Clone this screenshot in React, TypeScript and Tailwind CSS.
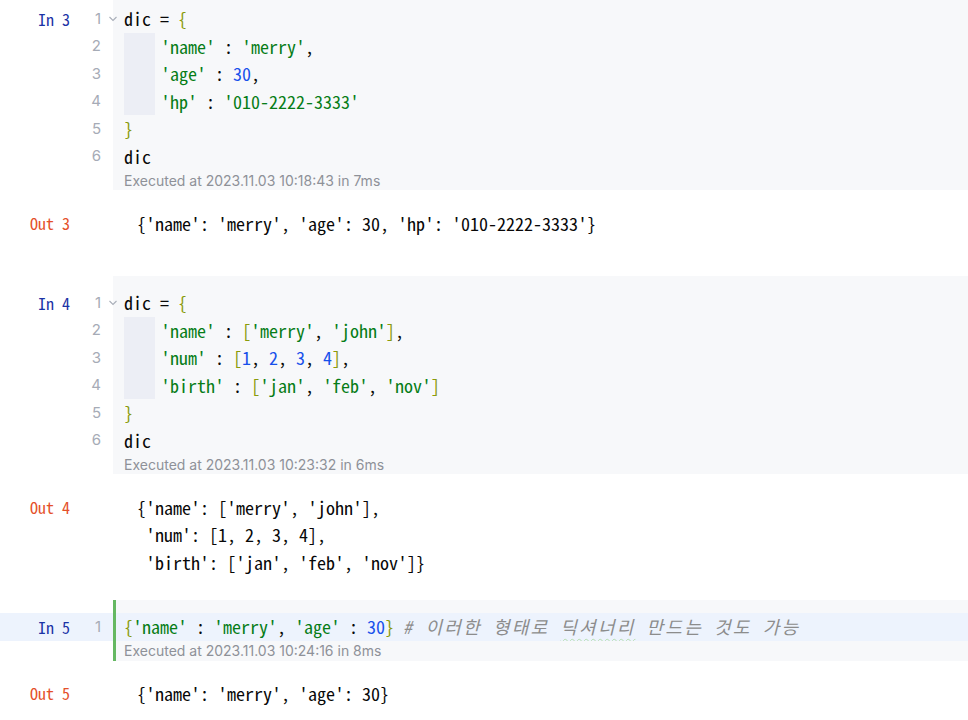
import React from "react";

const MONO = "font-['Noto_Sans_Mono_CJK_KR','DejaVu_Sans_Mono',monospace]";
const SANS = "font-['Inter','Noto_Sans',sans-serif]";

type Tok = { t: string; c?: string };
const S = "text-[#067d17]";
const N = "text-[#1750eb]";
const B = "text-[#8a9b0c]";
const C = "italic text-[#8c8c8c] tracking-[2.2px]";

function Chevron() {
  return (
    <svg width="10" height="8" viewBox="0 0 10 8" className="text-[#a9aeb9]">
      <polyline points="1.5,2 5,5.5 8.5,2" fill="none" stroke="currentColor" strokeWidth="1.1" />
    </svg>
  );
}

function CodeLine({
  label,
  num,
  toks,
  guide,
  fold,
  active,
  green,
}: {
  label?: string;
  num: number;
  toks: Tok[];
  guide?: boolean;
  fold?: boolean;
  active?: boolean;
  green?: boolean;
}) {
  return (
    <div className={`flex h-[27.5px] ${active ? "bg-[#edf3fd]" : ""}`}>
      <div className="w-[113px] shrink-0 flex items-center">
        <span className={`w-[70px] text-right text-[16px] text-[#1c33a6] ${MONO}`}>{label ?? ""}</span>
        <span className={`w-[31px] text-right text-[15px] text-[#a6abb6] ${SANS}`}>{num}</span>
        <span className="relative z-10 w-[12px] h-full flex items-center">
          {fold ? (
            <span className="ml-[7px] flex items-center">
              <Chevron />
            </span>
          ) : null}
        </span>
      </div>
      <div
        className={`flex-1 flex items-stretch ${active ? "bg-[#edf3fd]" : "bg-[#f7f8fa]"} ${
          green ? "border-l-[3px] border-[#65b862] pl-[8px]" : "pl-[11px]"
        }`}
      >
        {guide ? (
          <>
            <div className="w-[31px] bg-[#eceef5]" />
            <div className="w-[6px]" />
          </>
        ) : null}
        <div className={`flex items-center whitespace-pre text-[18px] text-[#080808] ${MONO}`}>
          {toks.map((k, i) => (
            <span key={i} className={k.c ?? ""}>
              {k.t}
            </span>
          ))}
        </div>
      </div>
    </div>
  );
}

function Cell({
  label,
  lines,
  exec,
  activeFirst,
  green,
}: {
  label: string;
  lines: { toks: Tok[]; guide?: boolean; fold?: boolean }[];
  exec: string;
  activeFirst?: boolean;
  green?: boolean;
}) {
  const codeBg = `flex-1 bg-[#f7f8fa] ${green ? "border-l-[3px] border-[#65b862] pl-[8px]" : "pl-[11px]"}`;
  return (
    <div className="flex flex-col">
      <div className="flex h-[13px]">
        <div className="w-[113px] shrink-0" />
        <div className={codeBg} />
      </div>
      {lines.map((l, i) => (
        <CodeLine
          key={i}
          label={i === 0 ? label : undefined}
          num={i + 1}
          toks={l.toks}
          guide={l.guide}
          fold={l.fold}
          active={activeFirst && i === 0}
          green={green}
        />
      ))}
      <div className="flex h-[20px]">
        <div className="w-[113px] shrink-0" />
        <div className={`${codeBg} flex items-center text-[14px] text-[#8e9198] ${SANS}`}>{exec}</div>
      </div>
    </div>
  );
}

function Out({ n, lines, pb }: { n: number; lines: string[]; pb: string }) {
  return (
    <div className={`flex pt-[19.5px] ${pb}`}>
      <div className={`w-[70px] shrink-0 text-right text-[16px] leading-[27.5px] text-[#e4502a] ${MONO}`}>
        {`Out ${n}`}
      </div>
      <div className={`pl-[67px] flex flex-col whitespace-pre text-[18px] leading-[27.5px] text-[#080808] ${MONO}`}>
        {lines.map((l, i) => (
          <div key={i} className="h-[27.5px] flex items-center">
            {l}
          </div>
        ))}
      </div>
    </div>
  );
}

export default function App() {
  return (
    <div className="w-[968px] h-[720px] overflow-hidden bg-white">
      <div className="-mt-[8px]">
        <Cell
          label="In 3"
          exec="Executed at 2023.11.03 10:18:43 in 7ms"
          lines={[
            { fold: true, toks: [{ t: "dic = " }, { t: "{", c: B }] },
            { guide: true, toks: [{ t: "'name'", c: S }, { t: " : " }, { t: "'merry'", c: S }, { t: "," }] },
            { guide: true, toks: [{ t: "'age'", c: S }, { t: " : " }, { t: "30", c: N }, { t: "," }] },
            { guide: true, toks: [{ t: "'hp'", c: S }, { t: " : " }, { t: "'010-2222-3333'", c: S }] },
            { toks: [{ t: "}", c: B }] },
            { toks: [{ t: "dic" }] },
          ]}
        />
        <Out n={3} lines={["{'name': 'merry', 'age': 30, 'hp': '010-2222-3333'}"]} pb="pb-[39px]" />
        <Cell
          label="In 4"
          exec="Executed at 2023.11.03 10:23:32 in 6ms"
          lines={[
            { fold: true, toks: [{ t: "dic = " }, { t: "{", c: B }] },
            {
              guide: true,
              toks: [
                { t: "'name'", c: S },
                { t: " : " },
                { t: "[", c: B },
                { t: "'merry'", c: S },
                { t: ", " },
                { t: "'john'", c: S },
                { t: "]", c: B },
                { t: "," },
              ],
            },
            {
              guide: true,
              toks: [
                { t: "'num'", c: S },
                { t: " : " },
                { t: "[", c: B },
                { t: "1", c: N },
                { t: ", " },
                { t: "2", c: N },
                { t: ", " },
                { t: "3", c: N },
                { t: ", " },
                { t: "4", c: N },
                { t: "]", c: B },
                { t: "," },
              ],
            },
            {
              guide: true,
              toks: [
                { t: "'birth'", c: S },
                { t: " : " },
                { t: "[", c: B },
                { t: "'jan'", c: S },
                { t: ", " },
                { t: "'feb'", c: S },
                { t: ", " },
                { t: "'nov'", c: S },
                { t: "]", c: B },
              ],
            },
            { toks: [{ t: "}", c: B }] },
            { toks: [{ t: "dic" }] },
          ]}
        />
        <Out
          n={4}
          lines={["{'name': ['merry', 'john'],", " 'num': [1, 2, 3, 4],", " 'birth': ['jan', 'feb', 'nov']}"]}
          pb="pb-[24px]"
        />
        <Cell
          label="In 5"
          green
          activeFirst
          exec="Executed at 2023.11.03 10:24:16 in 8ms"
          lines={[
            {
              toks: [
                { t: "{", c: B },
                { t: "'name'", c: S },
                { t: " : " },
                { t: "'merry'", c: S },
                { t: ", " },
                { t: "'age'", c: S },
                { t: " : " },
                { t: "30", c: N },
                { t: "}", c: B },
                { t: " " },
                { t: "# 이러한 형태로 ", c: C },
                {
                  t: "딕셔너리",
                  c: `${C} underline decoration-wavy decoration-1 decoration-[#b5dcae] underline-offset-[4px]`,
                },
                { t: " 만드는 것도 가능", c: C },
              ],
            },
          ]}
        />
        <Out n={5} lines={["{'name': 'merry', 'age': 30}"]} pb="pb-[20px]" />
      </div>
    </div>
  );
}
